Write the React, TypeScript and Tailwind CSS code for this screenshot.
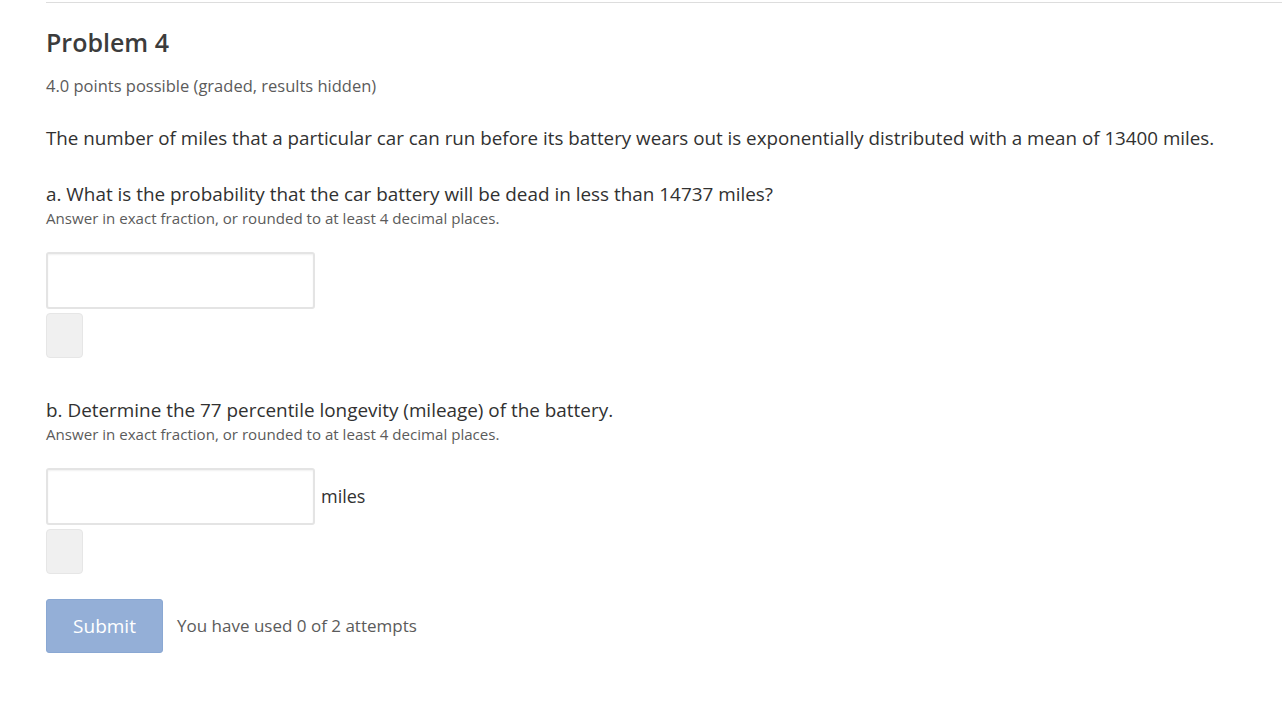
const font = { fontFamily: '"Open Sans", "Noto Sans", sans-serif' };

function AnswerBox({ unit }: { unit?: string }) {
  return (
    <div className="flex flex-col">
      <div className="flex items-center">
        <input
          type="text"
          className="w-[269px] h-[57px] border-2 border-[#e4e4e4] rounded-[3px] bg-white shadow-[inset_0_1px_2px_rgba(0,0,0,0.06)] outline-none"
        />
        {unit && <span className="ml-[6px] text-[18px] text-[#313131]">{unit}</span>}
      </div>
      <div className="mt-[4px] w-[37px] h-[45px] rounded-[4px] bg-[#f0f0f0] border border-[#e6e6e6]" />
    </div>
  );
}

export default function App() {
  return (
    <div className="min-h-[717px] bg-white text-[#313131]" style={font}>
      <div className="ml-[46px] pt-[2px]">
        <div className="border-t border-[#dddddd]" />
        <h2 className="mt-[23px] text-[25px] leading-[32px] font-semibold text-[#3c3c3c]">Problem 4</h2>
        <div className="mt-[17px] text-[16.5px] leading-[22px] text-[#5b5b5b]">
          4.0 points possible (graded, results hidden)
        </div>

        <p className="mt-[28px] text-[18.8px] leading-[26px]">
          The number of miles that a particular car can run before its battery wears out is exponentially distributed with a mean of 13400 miles.
        </p>

        <div className="mt-[30px]">
          <p className="text-[18.9px] leading-[26px]">a. What is the probability that the car battery will be dead in less than 14737 miles?</p>
          <p className="text-[15.1px] leading-[22px] text-[#5b5b5b]">Answer in exact fraction, or rounded to at least 4 decimal places.</p>
        </div>
        <div className="mt-[23px]">
          <AnswerBox />
        </div>

        <div className="mt-[39px]">
          <p className="text-[18.9px] leading-[26px]">b. Determine the 77 percentile longevity (mileage) of the battery.</p>
          <p className="text-[15.1px] leading-[22px] text-[#5b5b5b]">Answer in exact fraction, or rounded to at least 4 decimal places.</p>
        </div>
        <div className="mt-[23px]">
          <AnswerBox unit="miles" />
        </div>

        <div className="mt-[25px] flex items-center">
          <button className="w-[117px] h-[54px] rounded-[3px] bg-[#94afd7] text-white text-[19px] border border-[#8aa8d3]">
            Submit
          </button>
          <span className="ml-[14px] text-[17px] text-[#5b5b5b]">You have used 0 of 2 attempts</span>
        </div>
      </div>
    </div>
  );
}
